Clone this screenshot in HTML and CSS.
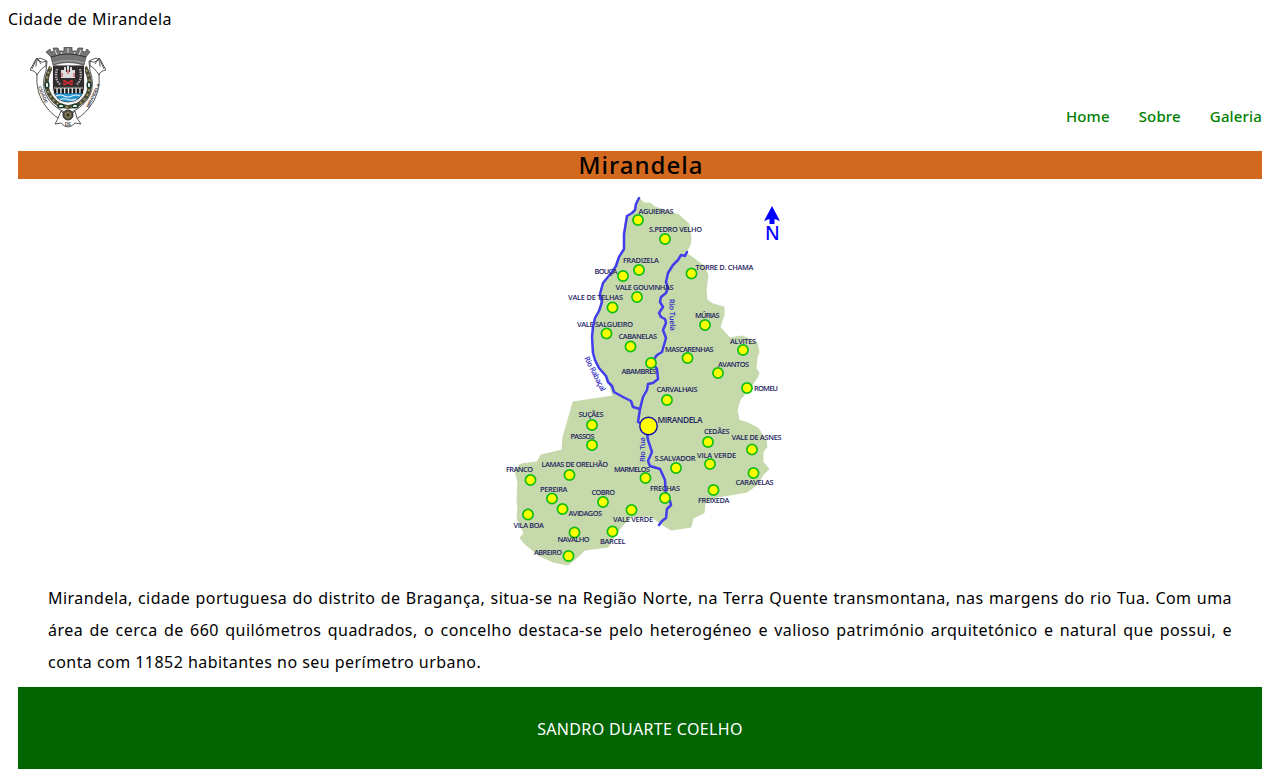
FILE: index.html
```html
<!DOCTYPE html>
<html lang="pt">
<head>
<meta charset="utf-8">
<title>Mirandela</title>
<link rel="stylesheet" href="styles.css">
</head>
<body>
<div class="site-title"><span>Cidade de Mirandela</span></div>
<header class="header">
<svg class="crest" viewBox="30 47 76 81" aria-label="Brasão de Mirandela">
  <g fill="#fff" stroke="#444" stroke-width=".9">
    <path d="M37 72Q35 94 47 108Q54 117 64 121L66 113Q51 106 46 95Q41 84 46 71L47 61L40 58Q34 60 37 72Z"/>
    <path d="M99 72Q101 94 89 108Q82 117 72 121L70 113Q85 106 90 95Q95 84 90 71L89 61L96 58Q102 60 99 72Z"/>
    <path d="M46 61Q41 64 38 59Q36 57 35 61L30 70Q36 71 37 75Q42 67 46 66ZM32 69L37 58L41 64M90 61Q95 64 98 59Q100 57 101 61L106 70Q100 71 99 75Q94 67 90 66ZM104 69L99 58L95 64"/>
    <path d="M61 111Q57 121 55 124L61 123Q68 131 75 123L81 124Q76 119 75 111Q68 120 61 111Z"/>
  </g>
  <path d="M51 67Q42 84 51 97Q58 107 68 107Q79 107 86 97Q94 84 85 67" fill="none" stroke="#4b4b3b" stroke-width="4.2"/>
  <path d="M51 67Q42 84 51 97Q58 107 68 107Q79 107 86 97Q94 84 85 67" fill="none" stroke="#a29a62" stroke-width="2" stroke-dasharray="2 3"/>
  <g fill="#fff" stroke="#183a27" stroke-width="1.6"><ellipse cx="47" cy="85" rx="1.8" ry="3"/><ellipse cx="89" cy="85" rx="1.8" ry="3"/><ellipse cx="61" cy="106" rx="3" ry="1.7"/><ellipse cx="75" cy="106" rx="3" ry="1.7"/></g>
  <path d="M52.5 65H84.5V88Q83 102 68 103Q54 102 52.5 88Z" fill="#302b2c" stroke="#eee"/>
  <path d="M54 87H83V91Q81 101 68 102Q56 101 54 91Z" fill="#2795ce"/>
  <path d="M54 87H83V93H54Z" fill="#e8e8e8"/>
  <path d="M54 87.5H83" stroke="#777" stroke-width="1.2"/>
  <path d="M54 91H83" stroke="#171717" stroke-width="5" stroke-dasharray="2.4 1.4"/>
  <path d="M56 96Q60 94 64 96T72 96T80 96M60 99.5Q64 98 68 99.5T76 99" fill="none" stroke="#e9f4f8" stroke-width="1.1"/>
  <path d="M61 78V70H64V67H66V72H67V66H69V72H70V67H72V70H75V78Z" fill="#ddd"/>
  <path d="M62 73V77M68 70V74M74 73V77" stroke="#d82c31"/>
  <path d="M64.5 80.5L71.5 85M71.5 80.5L64.5 85M64 80V85M72 80V85" fill="none" stroke="#d82c31" stroke-width="1.4"/>
  <g fill="none" stroke="#aaa" stroke-width="2.4" stroke-dasharray="1.5 1"><path d="M57 69Q54 80 61 85"/><path d="M80 69Q83 80 76 85"/></g>
  <path d="M46 52L50 49L51 52L54 51L53 48H58L59 51H64V47H72V51H77L78 48H83L82 51L85 52L87 49L90 52L86 57L84 65Q68 60 53 65L51 57Z" fill="#777575" stroke="#444" stroke-width=".7"/>
  <path d="M51 57Q68 51 86 57" fill="none" stroke="#333" stroke-width="1.2"/>
  <path d="M53 63Q68 58 84 63" fill="none" stroke="#aaa" stroke-width="1"/>
  <path d="M55 50L57 55M61 52L62 54M68 48V53M75 52L74 54M81 50L79 55" stroke="#ddd" stroke-width="1"/>
  <circle cx="68" cy="115" r="5" fill="#5d5a48" stroke="#252722"/><circle cx="68" cy="115" r="2.3" fill="#323229" stroke="#a69b68"/>
  <g class="motto"><text transform="translate(38 87) rotate(67)" textLength="18">CIDADE</text><text transform="translate(89 108) rotate(-64)" textLength="26">MIRANDELA</text><text x="65" y="126">DE</text></g>
</svg>
<nav class="nav"><a>Home</a><a>Sobre</a><a>Galeria</a></nav>
</header>
<main class="main">
<h1 class="heading"><span>Mirandela</span></h1>
<svg class="map" viewBox="480 190 320 380" aria-label="Mapa do concelho de Mirandela">
  <path class="land" d="M639 198L644 203L650 203L655 207L667 211L679 215L689 224L691 238L690 245L686 253L692 257L704 266L708 275L706 290L707 300L713 304L724 307L724 315L720 327L730 338L742 336L757 342L759 352L757 358L756 368L759 373L757 378L750 388L740 400L737 410L739 420L748 423L758 428L766 440L767 447L763 452L763 462L769 469L763 475L757 485L747 492L730 495L717 497L705 503L704 513L693 518L691 527L678 529L671 530L660 523L650 516L632 517L623 525L616 534L608 547L585 550L580 555L568 565L553 562L538 555L525 544L520 538L524 533L517 518L518 508L517 500L518 483L515 470L521 464L537 462L541 455L562 450L563 437L570 413L573 402L613 396L608 380L598 368L592 352L592 337L594 320L601 305L600 294L603 283L613 270L618 258L624 250L624 234L626 217L635 211Z"/>
  <g class="river">
    <path d="M639 198L636 204L635 210L632 213L627 216L626 222L624 234L624 249L619 257L616 266L612 272L603 283L600 294L602 302L599 311L595 318L593 327L592 337L593 353L595 360L599 368L606 376L608 382L612 386L614 392L623 397L631 401L633 407L640 409"/>
    <path d="M687 252L685 256L681 255L678 260L673 265L668 273L666 282L668 288L666 293L661 297L660 302L663 307L659 313L661 317L665 319L666 323L663 330L666 338L662 352L657 355L652 362L657 369L658 379L653 383L648 384L647 390L643 397L640 409L638 422L646 426L648 440L652 452L648 461L650 466L660 469L665 480L666 497L670 501L671 505L667 509L666 518L662 521L659 525"/>
  </g>
  <g class="town">
    <circle cx="638" cy="220" r="5.1"/><circle cx="665" cy="239" r="5.1"/><circle cx="639" cy="270" r="5.1"/><circle cx="623" cy="276" r="5.1"/><circle cx="691.5" cy="273.5" r="5.1"/><circle cx="637" cy="297" r="5.1"/><circle cx="612.5" cy="307.5" r="5.1"/><circle cx="606.5" cy="333.5" r="5.1"/><circle cx="705" cy="325" r="5.1"/><circle cx="630.5" cy="346.5" r="5.1"/><circle cx="743" cy="350" r="5.1"/><circle cx="687.5" cy="358" r="5.1"/><circle cx="651" cy="363" r="5.1"/><circle cx="718" cy="373" r="5.1"/><circle cx="747" cy="388" r="5.1"/><circle cx="667" cy="400" r="5.1"/><circle cx="592" cy="425" r="5.1"/><circle cx="592" cy="445" r="5.1"/><circle cx="708" cy="442" r="5.1"/><circle cx="752" cy="449.5" r="5.1"/><circle cx="710" cy="464" r="5.1"/><circle cx="676" cy="468" r="5.1"/><circle cx="753.5" cy="473" r="5.1"/><circle cx="645.5" cy="478" r="5.1"/><circle cx="569.5" cy="475" r="5.1"/><circle cx="530.5" cy="480" r="5.1"/><circle cx="713.5" cy="490" r="5.1"/><circle cx="552" cy="498.5" r="5.1"/><circle cx="603" cy="502" r="5.1"/><circle cx="665" cy="498" r="5.1"/><circle cx="562.5" cy="509" r="5.1"/><circle cx="631.5" cy="510" r="5.1"/><circle cx="528" cy="514.5" r="5.1"/><circle cx="574.5" cy="532.5" r="5.1"/><circle cx="612.5" cy="531.5" r="5.1"/><circle cx="568.5" cy="556" r="5.1"/>
  </g>
  <circle class="city" cx="648.5" cy="426" r="8.7"/>
  <g class="label">
    <text x="638.5" y="214" textLength="35">AGUIEIRAS</text><text x="649" y="232" textLength="53">S.PEDRO VELHO</text><text x="623" y="263" textLength="36">FRADIZELA</text><text x="594.5" y="273.5" textLength="23">BOUÇA</text><text x="695.5" y="270" textLength="58">TORRE D. CHAMA</text><text x="615.5" y="290" textLength="58">VALE GOUVINHAS</text><text x="568" y="300" textLength="55">VALE DE TELHAS</text><text x="577" y="327" textLength="56">VALE SALGUEIRO</text><text x="695" y="317.5" textLength="24.5">MÚRIAS</text><text x="618.5" y="339" textLength="38.5">CABANELAS</text><text x="730" y="343.5" textLength="26">ALVITES</text><text x="665" y="352" textLength="48.5">MASCARENHAS</text><text x="621.5" y="374" textLength="35">ABAMBRES</text><text x="718" y="366.5" textLength="31">AVANTOS</text><text x="754" y="391" textLength="24">ROMEU</text><text x="656.5" y="392" textLength="41">CARVALHAIS</text><text x="578.5" y="417" textLength="25">SUÇÃES</text><text x="570.5" y="438.5" textLength="24">PASSOS</text><text x="704" y="434" textLength="25.5">CEDÃES</text><text x="731.5" y="439.5" textLength="50">VALE DE ASNES</text><text x="697" y="458" textLength="39">VILA VERDE</text><text x="654.5" y="461" textLength="41">S.SALVADOR</text><text x="735.5" y="485" textLength="38">CARAVELAS</text><text x="614" y="472" textLength="36">MARMELOS</text><text x="541.5" y="467" textLength="66.5">LAMAS DE ORELHÃO</text><text x="506" y="471.5" textLength="27">FRANCO</text><text x="698" y="502.5" textLength="31.5">FREIXEDA</text><text x="540" y="492" textLength="27.5">PEREIRA</text><text x="591.5" y="494.5" textLength="23.5">COBRO</text><text x="650" y="490.5" textLength="30">FRECHAS</text><text x="568.5" y="515.5" textLength="33.5">AVIDAGOS</text><text x="613" y="522" textLength="40">VALE VERDE</text><text x="513.5" y="527.5" textLength="30.5">VILA BOA</text><text x="557.5" y="542" textLength="32">NAVALHO</text><text x="600" y="543.5" textLength="25.5">BARCEL</text><text x="534" y="555" textLength="28">ABREIRO</text>
    <text class="city-name" x="657.5" y="422.5" textLength="45">MIRANDELA</text>
  </g>
  <g class="river-name"><text transform="translate(584 358) rotate(63)" textLength="38">Rio Rabaçal</text><text transform="translate(669 299) rotate(88)" textLength="32">Rio Tuela</text><text transform="translate(645 462) rotate(-90)" textLength="25">Rio Tua</text></g>
  <path d="M772 206L780 221L774.5 219V224H769.5V219L764 221Z" fill="#00f"/>
  <text class="north" x="765" y="240">N</text>
</svg>
<p class="intro"><span class="line">Mirandela, cidade portuguesa do distrito de Bragança, situa-se na Região Norte, na Terra Quente transmontana, nas margens do rio Tua. Com uma</span> <span class="line">área de cerca de 660 quilómetros quadrados, o concelho destaca-se pelo heterogéneo e valioso património arquitetónico e natural que possui, e</span> <span class="line last">conta com 11852 habitantes no seu perímetro urbano.</span></p>
</main>
<footer class="footer"><span>SANDRO DUARTE COELHO</span></footer>
</body>
</html>
```
FILE: styles.css
```css
body { margin: 0; background: #fff; color: #000; font: 16px/22px "Noto Sans", sans-serif; height: 779px; overflow: hidden; }
.site-title { padding: 8px 8px 0; height: 22px; letter-spacing: .48px; }
.header { display: flex; justify-content: space-between; align-items: flex-start; height: 104px; margin: 17px 18px 0 30px; }
.crest { width: 76px; height: 81px; }
.motto { font: bold 4.5px "Liberation Sans", sans-serif; fill: #444; }
.nav { display: flex; gap: 29px; padding-top: 58px; color: #008000; font-size: 15px; font-weight: 500; letter-spacing: .15px; }
.main { margin: 0 18px; }
.heading { margin: 0; height: 28px; background: #d2691e; text-align: center; font-size: 24px; line-height: 28px; font-weight: 500; letter-spacing: 1px; text-indent: 2px; }
.map { display: block; width: 320px; height: 380px; margin: 11px auto 12px; }
.land { fill: #c5d9ab; stroke: #c5d9ab; stroke-linejoin: round; }
.river { fill: none; stroke: #423ded; stroke-width: 2.5; stroke-linejoin: round; stroke-linecap: round; }
.town { fill: #ff0; stroke: #12be12; stroke-width: 1.7; }
.city { fill: #ff0; stroke: #1111a8; stroke-width: 1.4; }
.label { font: 600 7.4px "Open Sans", sans-serif; fill: #24245f; }
.city-name { font-size: 8.4px; }
.river-name { font: 600 7.6px "Open Sans", sans-serif; fill: #332fc5; }
.north { font: 500 19px "Noto Sans", sans-serif; fill: #00f; }
.intro { margin: 0 30px; height: 105px; line-height: 32px; letter-spacing: .46px; }
.line { display: block; white-space: nowrap; text-align: justify; text-align-last: justify; }
.line.last { text-align-last: left; }
.footer { display: flex; align-items: center; justify-content: center; margin: 0 18px; height: 82px; background: #006400; color: #fff; letter-spacing: .35px; }
.footer span { padding-top: 2px; }
```
